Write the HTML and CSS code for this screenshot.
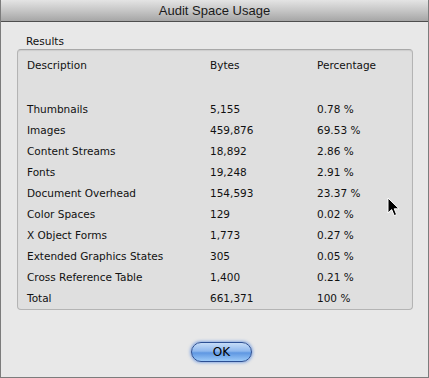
FILE: index.html
```html
<!DOCTYPE html>
<html>
<head>
<meta charset="utf-8">
<link rel="stylesheet" href="styles.css">
</head>
<body>
<div class="window">
  <div class="titlebar">Audit Space Usage</div>
  <div class="content">
    <div class="group-label">Results</div>
    <div class="group">
      <div class="row head"><span>Description</span><span>Bytes</span><span>Percentage</span></div>
      <div class="spacer"></div>
      <div class="row"><span>Thumbnails</span><span>5,155</span><span>0.78 %</span></div>
      <div class="row"><span>Images</span><span>459,876</span><span>69.53 %</span></div>
      <div class="row"><span>Content Streams</span><span>18,892</span><span>2.86 %</span></div>
      <div class="row"><span>Fonts</span><span>19,248</span><span>2.91 %</span></div>
      <div class="row"><span>Document Overhead</span><span>154,593</span><span>23.37 %</span></div>
      <div class="row"><span>Color Spaces</span><span>129</span><span>0.02 %</span></div>
      <div class="row"><span>X Object Forms</span><span>1,773</span><span>0.27 %</span></div>
      <div class="row"><span>Extended Graphics States</span><span>305</span><span>0.05 %</span></div>
      <div class="row"><span>Cross Reference Table</span><span>1,400</span><span>0.21 %</span></div>
      <div class="row"><span>Total</span><span>661,371</span><span>100 %</span></div>
    </div>
    <div class="actions">
      <button class="ok">OK</button>
    </div>
  </div>
  <svg class="cursor" width="14" height="21" viewBox="0 0 14 21">
    <path d="M1 1 L1 16 L4.7 12.6 L7.2 18.6 L9.6 17.6 L7.2 11.8 L12 11.8 Z" fill="#000" stroke="#fff" stroke-width="1" stroke-linejoin="round"/>
  </svg>
</div>
</body>
</html>
```
FILE: styles.css
```css
html, body {
  margin: 0;
  padding: 0;
  background: #e8e8e8;
}
.window {
  position: relative;
  width: 429px;
  height: 378px;
  box-sizing: border-box;
  border: 1px solid #7c7c7c;
  border-top: none;
  background: #e8e8e8;
  font-family: "DejaVu Sans", sans-serif;
  color: #111;
  overflow: hidden;
}
.titlebar {
  height: 22px;
  margin: 0 -1px;
  box-sizing: border-box;
  border-bottom: 1px solid #4e4e4e;
  border-radius: 4px 4px 0 0;
  background: linear-gradient(#e4e4e4, #c6c6c6 50%, #a6a6a6);
  text-align: center;
  font-family: "Liberation Sans", sans-serif;
  font-size: 13px;
  line-height: 22px;
  color: #1a1a1a;
}
.content {
  padding: 13px 15px 0 16px;
}
.group-label {
  font-size: 10.5px;
  line-height: 13px;
  padding-left: 9px;
  height: 13px;
}
.group {
  margin-top: 1px;
  height: 261px;
  box-sizing: border-box;
  border: 1px solid #b4b4b4;
  border-top-color: #a8a8a8;
  border-radius: 4px;
  background: #dfdfdf;
  box-shadow: inset 0 1px 1px rgba(0,0,0,0.08);
  padding: 5px 0 0 9px;
}
.row {
  display: grid;
  grid-template-columns: 183px 107px 1fr;
  height: 21px;
  line-height: 21px;
  font-size: 10.5px;
}
.spacer {
  height: 23px;
}
.actions {
  display: flex;
  justify-content: center;
  padding-top: 32px;
  padding-left: 13px;
}
.ok {
  width: 61px;
  height: 20px;
  border-radius: 10px;
  border: 1px solid #2c4f93;
  background: linear-gradient(#c6dcf7 0%, #8fb8ee 45%, #5f97e2 55%, #9ccaf8 100%);
  box-shadow: 0 0 3px 1px rgba(60,120,220,0.55);
  font-family: "DejaVu Sans", sans-serif;
  font-size: 12px;
  color: #000;
  padding: 0;
  line-height: 18px;
}
.cursor {
  position: absolute;
  left: 386px;
  top: 197px;
}
```
